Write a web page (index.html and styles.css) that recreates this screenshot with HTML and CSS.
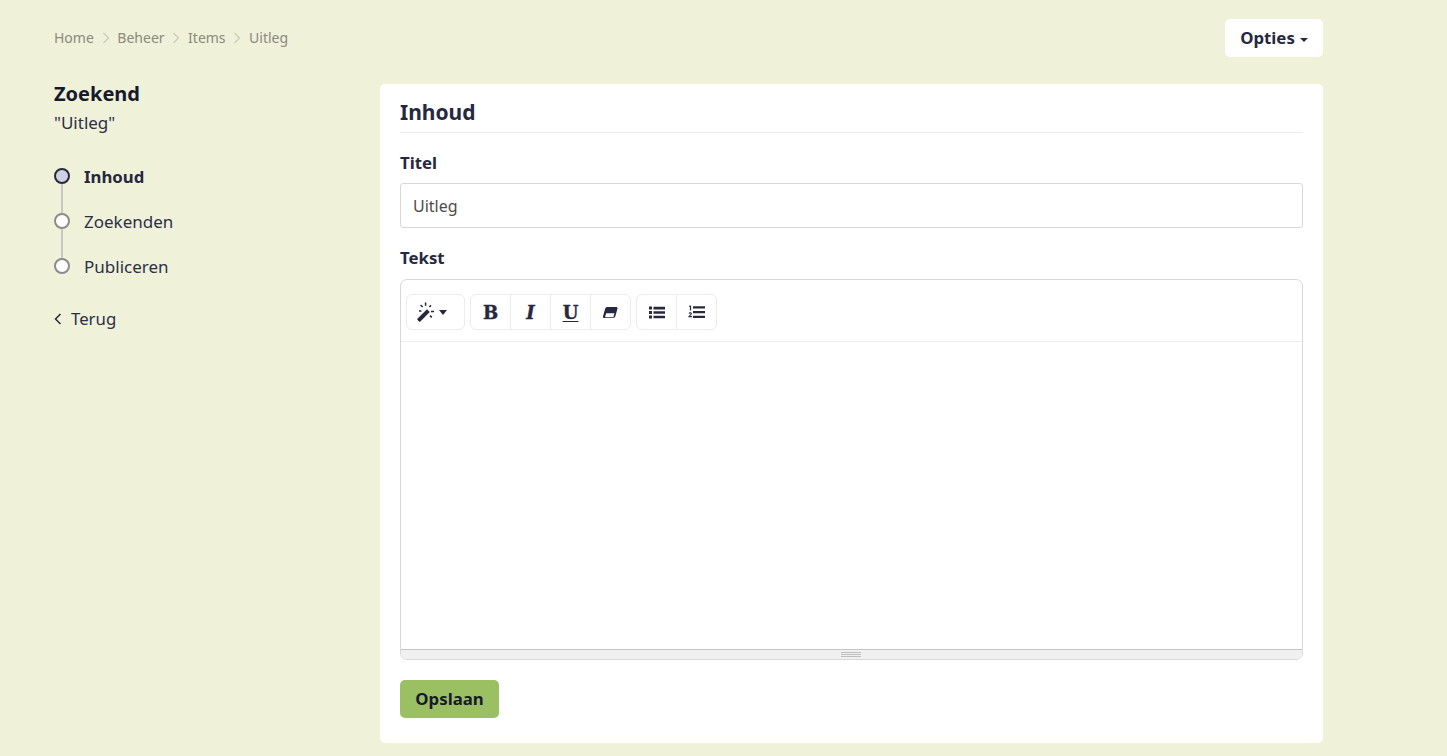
FILE: index.html
```html
<!DOCTYPE html>
<html lang="nl">
<head>
<meta charset="utf-8">
<title>Zoekend</title>
<link rel="stylesheet" href="styles.css">
</head>
<body>
<div class="page">
  <header class="top">
    <nav class="crumbs">
      <a>Home</a>
      <svg class="sep" viewBox="0 0 8 12"><path d="M1.5 1l5 5-5 5"/></svg>
      <a>Beheer</a>
      <svg class="sep" viewBox="0 0 8 12"><path d="M1.5 1l5 5-5 5"/></svg>
      <a>Items</a>
      <svg class="sep" viewBox="0 0 8 12"><path d="M1.5 1l5 5-5 5"/></svg>
      <a>Uitleg</a>
    </nav>
    <button class="options">Opties<span class="caret"></span></button>
  </header>
  <div class="main">
    <aside class="side">
      <h2 class="side-title">Zoekend</h2>
      <p class="side-sub">"Uitleg"</p>
      <ul class="steps">
        <li class="step active"><span class="dot"></span>Inhoud</li>
        <li class="step"><span class="dot"></span>Zoekenden</li>
        <li class="step"><span class="dot"></span>Publiceren</li>
      </ul>
      <a class="back"><svg viewBox="0 0 8 12"><path d="M6.500 1l-5 5 5 5"/></svg>Terug</a>
    </aside>
    <section class="card">
      <h3 class="card-title">Inhoud</h3>
      <label class="label">Titel</label>
      <input class="input" value="Uitleg">
      <label class="label label-tekst">Tekst</label>
      <div class="editor">
        <div class="toolbar">
          <div class="group">
            <button class="tool tool-wide">
              <svg class="ico" width="20" height="20" viewBox="0 0 20 20">
                <path class="fill" d="M.6 16.600l9.400-9.400 2.800 2.800-9.400 9.400a1 1 0 0 1-1.400 0L.6 18a1 1 0 0 1 0-1.400z"/>
                <path class="line" d="M8.600.6v3.200M3.600 3l2 2M14 3.400l-1.600 1.600M2 9h2.400M14 9.400h3M13 13.600l1.800 1.800"/>
              </svg>
              <span class="tool-caret"></span>
            </button>
          </div>
          <div class="group">
            <button class="tool tool-b">B</button>
            <button class="tool tool-i">I</button>
            <button class="tool tool-u">U</button>
            <button class="tool">
              <svg class="ico" width="15" height="13" viewBox="0 0 14 12">
                <path class="fill" fill-rule="evenodd" d="M4.200.8h8c1 0 1.600.8 1.300 1.800l-2 7c-.3 1-1.200 1.600-2.200 1.600h-8c-1 0-1.600-.8-1.300-1.800l2-7C2.300 1.400 3.200.8 4.200.8zM3 6.800l-1 3.200c-.1.300.1.500.4.500h7.200l1.100-3.700z"/>
              </svg>
            </button>
          </div>
          <div class="group">
            <button class="tool">
              <svg class="ico" width="16" height="13" viewBox="0 0 16 13">
                <path class="fill" d="M0 .5h3v3H0zM0 5h3v3H0zM0 9.500h3v3H0zM4.500 .8H16v2.600H4.500zM4.500 5.200H16v2.600H4.500zM4.500 9.700H16v2.600H4.500z"/>
              </svg>
            </button>
            <button class="tool">
              <svg class="ico" width="17" height="14" viewBox="0 0 17 14">
                <path class="fill" d="M5 1.300h12v2.200H5zM5 6h12v2.200H5zM5 10.700h12v2.200H5zM1.500.5h1.600v5H1.900V2H1.200zM.5 8.400c.3-.8 1-1.200 1.700-1.200 1 0 1.700.6 1.700 1.400 0 .8-.6 1.300-1.300 1.900l-.6.500h2v1.200H.4v-1c1.300-1.100 2.200-1.900 2.200-2.500 0-.3-.2-.4-.5-.4s-.5.200-.6.500z"/>
              </svg>
            </button>
          </div>
        </div>
        <div class="editable"></div>
        <div class="statusbar"><span class="grip"></span></div>
      </div>
      <button class="save">Opslaan</button>
    </section>
  </div>
</div>
</body>
</html>
```

FILE: styles.css
```css
* { box-sizing: border-box; }
html, body { margin: 0; height: 100%; }
body {
  background: #eff1d8;
  color: #2d2f49;
  font-family: "Noto Sans", sans-serif;
  font-size: 17px;
  line-height: 24px;
  overflow: hidden;
}
button { font-family: inherit; }
.page { width: 1269px; margin-left: 54px; }

.top {
  height: 84px;
  padding-top: 19px;
  display: flex;
  justify-content: space-between;
  align-items: flex-start;
}
.crumbs {
  display: flex;
  align-items: center;
  height: 38px;
  font-size: 14px;
  color: #8a8a7e;
}
.sep {
  width: 8px;
  height: 12px;
  margin: 0 7.750px;
  fill: none;
  stroke: #c9cabd;
  stroke-width: 1.2;
}
.options {
  width: 98px;
  height: 38px;
  border: 0;
  border-radius: 5px;
  background: #fff;
  color: #27283f;
  font-size: 16.8px;
  font-weight: 700;
  padding: 0 0 2px;
}
.caret {
  display: inline-block;
  margin-left: 5px;
  vertical-align: 2px;
  border-left: 4px solid transparent;
  border-right: 4px solid transparent;
  border-top: 4px solid #27283f;
}

.main { display: flex; align-items: flex-start; }
.side { width: 326px; flex: none; }
.side-title {
  margin: -2px 0 0;
  font-size: 20px;
  line-height: 24px;
  font-weight: 700;
  color: #171a2e;
}
.side-sub { margin: 5px 0 0; line-height: 24px; }
.steps { list-style: none; margin: 19px 0 0; padding: 0; }
.step {
  position: relative;
  display: flex;
  align-items: center;
  height: 45px;
  padding-left: 30px;
}
.step:not(:last-child)::after {
  content: "";
  position: absolute;
  left: 7px;
  top: 30px;
  width: 2px;
  height: 30px;
  background: #c8c8c6;
}
.dot {
  position: absolute;
  z-index: 1;
  left: 0;
  top: 14px;
  width: 16px;
  height: 16px;
  border: 2px solid #8b8b8b;
  border-radius: 50%;
  background: #fff;
}
.active { font-weight: 700; font-size: 16.8px; color: #27283f; }
.active .dot { border-color: #27283f; background: #d0d1e0; }
.back { display: flex; align-items: center; margin-top: 18px; font-size: 16.8px; }
.back svg {
  width: 8px;
  height: 12px;
  margin-right: 9px;
  fill: none;
  stroke: #27283f;
  stroke-width: 1.500;
}

.card {
  flex: 1;
  height: 659px;
  background: #fff;
  border-radius: 5px;
  padding: 14px 20px 0;
}
.card-title {
  margin: 0 0 18px;
  height: 35px;
  padding-bottom: 5px;
  font-size: 21px;
  line-height: 29px;
  font-weight: 700;
  color: #27283f;
  border-bottom: 1px solid #ececec;
}
.label { display: block; font-size: 16.8px; font-weight: 700; line-height: 24px; margin-bottom: 8px; color: #27283f; }
.input {
  display: block;
  width: 100%;
  height: 45px;
  padding: 0 12px;
  border: 1px solid #d8d8d8;
  border-radius: 3px;
  background: #fff;
  color: #4c4c4c;
  font: 16px "Noto Sans", sans-serif;
  outline: 0;
}
.label-tekst { margin: 18px 0 9px; }

.editor {
  height: 381px;
  display: flex;
  flex-direction: column;
  border: 1px solid #d8d8d8;
  border-radius: 7px;
  overflow: hidden;
}
.toolbar {
  flex: none;
  height: 62px;
  display: flex;
  gap: 5px;
  padding: 14px 5px 0;
  border-bottom: 1px solid #eeeeee;
}
.group {
  display: flex;
  height: 36px;
  border: 1px solid #ececec;
  border-radius: 6px;
}
.tool {
  width: 40px;
  height: 34px;
  padding: 0;
  border: 0;
  background: transparent;
  color: #27283f;
  display: flex;
  align-items: center;
  justify-content: center;
}
.tool:first-child:not(:last-child) { width: 39px; }
.tool + .tool { border-left: 1px solid #ececec; }
.tool-wide { width: 57px; gap: 2px; justify-content: flex-start; padding-left: 10px; }
.ico .fill { fill: #27283f; }
.ico .line { fill: none; stroke: #27283f; stroke-width: 1.500; }
.tool-caret {
  border-left: 4px solid transparent;
  border-right: 4px solid transparent;
  border-top: 5px solid #27283f;
}
.tool-b, .tool-i, .tool-u {
  font-family: "DejaVu Serif", serif;
  font-size: 18px;
  font-weight: 700;
  -webkit-text-stroke: 0.4px #27283f;
}
.tool-i { font-style: italic; }
.tool-u { text-decoration: underline; text-underline-offset: 2px; }
.editable { flex: 1; }
.statusbar {
  flex: none;
  height: 10px;
  background: #f0f0f0;
  border-top: 1px solid #c4c4c4;
  display: flex;
  justify-content: center;
  padding: 2px 1px 0 0;
}
.grip {
  width: 20px;
  height: 5px;
  border-top: 1px solid #bdbdbd;
  border-bottom: 1px solid #bdbdbd;
  background: linear-gradient(#bdbdbd, #bdbdbd) center / 100% 1px no-repeat;
}
.save {
  display: block;
  margin-top: 20px;
  width: 99px;
  height: 38px;
  border: 0;
  border-radius: 5px;
  background: #9bc063;
  color: #171a2e;
  font-size: 16.8px;
  font-weight: 700;
  padding: 0 0 2px;
}
```
